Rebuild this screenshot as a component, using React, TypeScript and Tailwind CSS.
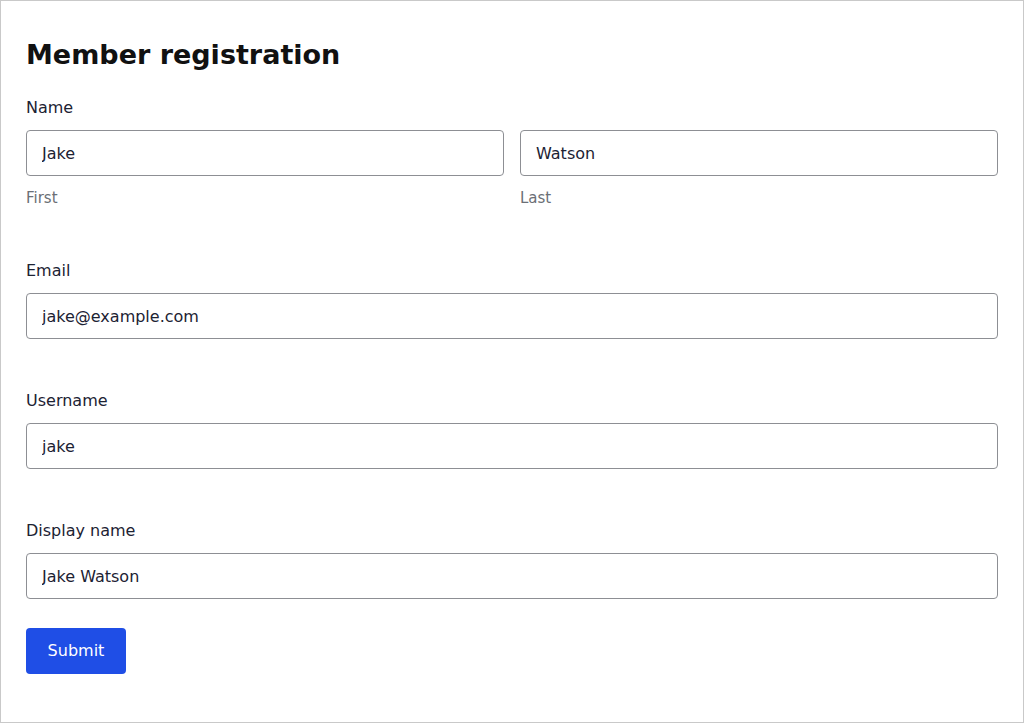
function Field({
  label,
  value,
  className = "",
}: {
  label: string;
  value: string;
  className?: string;
}) {
  return (
    <div className={className}>
      <label className="block pt-px text-[16px] leading-6 text-[#1c2233]">{label}</label>
      <input
        readOnly
        value={value}
        className="mt-[10px] block h-[46px] w-full rounded-[4px] border border-[#8d8f94] bg-white px-[15px] text-[16px] text-[#1c2233] outline-none"
      />
    </div>
  );
}

export default function App() {
  return (
    <div
      className="h-[723px] w-[1024px] border border-[#c9c9c9] bg-white"
      style={{ fontFamily: '"DejaVu Sans", "Noto Sans", sans-serif' }}
    >
      <div className="px-[25px] pt-[36px]">
        <h1 className="text-[27px] font-bold leading-9 text-[#111111]">Member registration</h1>

        {/* Name */}
        <div className="mt-[22px]">
          <div className="pt-px text-[16px] leading-6 text-[#1c2233]">Name</div>
          <div className="mt-[10px] grid grid-cols-2 gap-4">
            <div>
              <input
                readOnly
                value="Jake"
                className="block h-[46px] w-full rounded-[4px] border border-[#8d8f94] bg-white px-[15px] text-[16px] text-[#1c2233] outline-none"
              />
              <div className="mt-[11px] text-[15px] leading-[22px] text-[#6b6f76]">First</div>
            </div>
            <div>
              <input
                readOnly
                value="Watson"
                className="block h-[46px] w-full rounded-[4px] border border-[#8d8f94] bg-white px-[15px] text-[16px] text-[#1c2233] outline-none"
              />
              <div className="mt-[11px] text-[15px] leading-[22px] text-[#6b6f76]">Last</div>
            </div>
          </div>
        </div>

        <Field label="Email" value="jake@example.com" className="mt-[49px]" />
        <Field label="Username" value="jake" className="mt-[49px]" />
        <Field label="Display name" value="Jake Watson" className="mt-[49px]" />

        <button className="mt-[29px] h-[46px] w-[100px] rounded-[4px] bg-[#1f4ee6] text-[16px] font-medium text-white">
          Submit
        </button>
      </div>
    </div>
  );
}
